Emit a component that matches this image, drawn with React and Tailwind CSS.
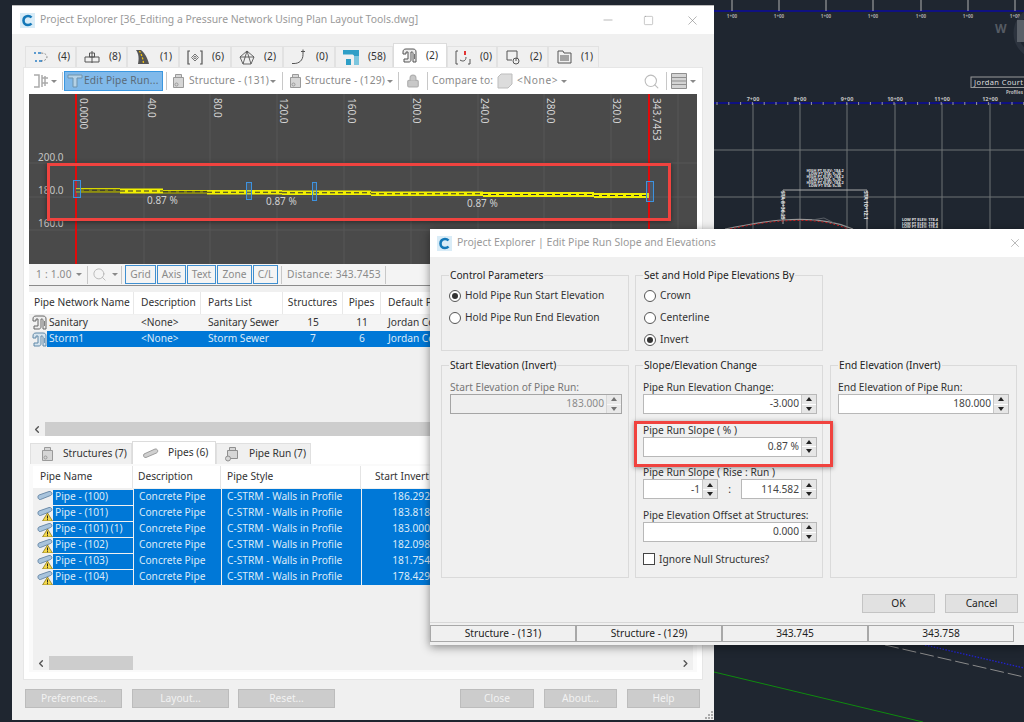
import { Minus, Square, X, Search, Lock, ChevronLeft, ChevronRight } from 'lucide-react';

const tabs = [
  { n: '(4)', w: 'w-[51px]', icon: 'dash' },
  { n: '(8)', w: 'w-[51px]', icon: 'struct' },
  { n: '(1)', w: 'w-[52px]', icon: 'road' },
  { n: '(6)', w: 'w-[52px]', icon: 'node' },
  { n: '(2)', w: 'w-[52px]', icon: 'penta' },
  { n: '(0)', w: 'w-[52px]', icon: 'curve' },
  { n: '(58)', w: 'w-[58px]', icon: 'blue' },
  { n: '(2)', w: 'w-[54px]', icon: 'network', active: true },
  { n: '(0)', w: 'w-[50px]', icon: 'alert' },
  { n: '(2)', w: 'w-[51px]', icon: 'label' },
  { n: '(1)', w: 'w-[51px]', icon: 'list' },
];

function TabIcon({ name }) {
  const stroke = '#555';
  if (name === 'dash')
    return (
      <svg width="16" height="14" viewBox="0 0 16 14" fill="none">
        <path d="M1 3h2M5 3h3" stroke="#2b7fc4" strokeWidth="1.3" />
        <path d="M8 3c4 0 6 2 6 4s-2 4-6 4" stroke="#8a8a8a" strokeDasharray="2 1.5" />
        <path d="M2 11h2M6 11h3" stroke="#2b7fc4" strokeWidth="1.3" />
      </svg>
    );
  if (name === 'struct')
    return (
      <svg width="16" height="14" viewBox="0 0 16 14" fill="none" stroke={stroke}>
        <path d="M8 1v12M5.5 3h5v4h-5zM1 7h14v5H1z" />
      </svg>
    );
  if (name === 'road')
    return (
      <svg width="16" height="16" viewBox="0 0 16 16">
        <path d="M1 1h5c4 3 7 9 8 14H3C4 10 4 5 1 1z" fill="#555" />
        <path d="M4.5 2c2 3 3.5 8 4 12" stroke="#f4c20d" strokeWidth="1.3" strokeDasharray="2 1.5" fill="none" />
      </svg>
    );
  if (name === 'node')
    return (
      <svg width="16" height="15" viewBox="0 0 16 15" fill="none" stroke={stroke}>
        <path d="M3 1H1v13h2M13 1h2v13h-2" strokeWidth="1.2" />
        <path d="M8 4l3.5 3.5L8 11 4.5 7.500z" stroke="#777" />
        <circle cx="8" cy="7.5" r="1.2" stroke="#777" />
      </svg>
    );
  if (name === 'penta')
    return (
      <svg width="16" height="15" viewBox="0 0 16 15" fill="none" stroke={stroke}>
        <path d="M8 1l7 6-3 7H4L1 7zM1 7h14M8 1L4 14M8 1l4 13" strokeWidth="0.9" />
      </svg>
    );
  if (name === 'curve')
    return (
      <svg width="16" height="16" viewBox="0 0 16 16" fill="none" stroke={stroke}>
        <path d="M1 14.5h2c5 0 9-3 9-9" />
        <path d="M12 .5v5M10 2.5h4" />
      </svg>
    );
  if (name === 'blue')
    return (
      <svg width="16" height="15" viewBox="0 0 16 15">
        <path d="M0 0h16v15h-5V6C11 5 10 4.5 9 4.5H0z" fill="#2f9fc7" />
        <path d="M3 9h5v6H3z" fill="#2f9fc7" />
        <path d="M11 6h5v9h-5z" fill="#7cc6de" />
      </svg>
    );
  if (name === 'network') return <NetworkIcon />;
  if (name === 'alert')
    return (
      <svg width="16" height="15" viewBox="0 0 16 15" fill="none" stroke={stroke}>
        <path d="M3 1H1v13h2M13 14h2V9" />
        <path d="M5 10c3 2 6 1 6-3" />
        <path d="M10 1v4" stroke="#e02020" strokeWidth="1.8" />
      </svg>
    );
  if (name === 'label')
    return (
      <svg width="16" height="15" viewBox="0 0 16 15" fill="none" stroke={stroke}>
        <path d="M2 1h10v8M2 1v9h5" />
        <circle cx="11" cy="11" r="3" />
        <path d="M11 8v3" />
      </svg>
    );
  return (
    <svg width="15" height="14" viewBox="0 0 15 14" fill="none" stroke={stroke}>
      <path d="M1 13V1h5l1 2h7v10zM3 6h9M3 8h9M3 10h9" />
    </svg>
  );
}

function NetworkIcon({ color = '#555', fill = '#ececec' }) {
  return (
    <svg width="15" height="15" viewBox="0 0 15 15" fill={fill} stroke={color} className="shrink-0">
      <path d="M1 4c0-2 1-3 3-3h7c2 0 3 1 3 3v10h-3V5c0-1-1-1-1-1H9v8c0 1-1 2-2 2H2v-3h4V4H4v2H1z" />
      <path d="M12.500 6v5" strokeWidth="0.8" />
    </svg>
  );
}

function Caret({ color = 'border-t-[#8a8a8a]' }) {
  return <span className={`block w-0 h-0 border-x-[3px] border-x-transparent border-t-[3px] ${color}`} />;
}

function Sep({ className = 'mx-[3px]' }) {
  return <span className={`w-px h-[18px] bg-[#c8c8c8] shrink-0 ${className}`} />;
}

function CanIcon({ className = '' }) {
  return (
    <svg className={`shrink-0 ${className}`} width="13" height="16" viewBox="0 0 13 16" fill="#d6d6d6" stroke="#9a9a9a">
      <path d="M3.5 1.5h6v3h-6z" />
      <path d="M1.5 4.5h10v10h-10z" />
      <circle cx="4.5" cy="11.5" r="1.5" fill="none" />
    </svg>
  );
}

function Toolbar() {
  return (
    <div className="h-[26px] flex items-center text-[#8a8a8a] text-[10.2px] whitespace-nowrap">
      <svg className="ml-[9px] shrink-0" width="17" height="16" viewBox="0 0 17 16" fill="none" stroke="#aaa" strokeWidth="1.5">
        <path d="M1 2h5v12H1M9 2v12M9 5h6M9 10h6M12 3v5M12 8v5" />
      </svg>
      <span className="ml-[1px]"><Caret /></span>
      <Sep className="ml-[5px] mr-[1px]" />
      <div className="w-[99px] h-[20px] flex items-center bg-[#80b9ea] border border-[#3a97e0] text-[#5b6b78] gap-[1px] pl-[2px] shrink-0">
        <svg width="16" height="16" viewBox="0 0 16 16" fill="#b5d2e6" stroke="#6f93ad">
          <path d="M1 2h14v3h-5v9H6V5H1z" />
        </svg>
        <span className="tracking-[0.2px]">Edit Pipe Run...</span>
      </div>
      <Sep className="ml-[3px] mr-[5px]" />
      <CanIcon />
      <span className="ml-[4px] w-[77px] tracking-[0.2px]">Structure - (131)</span>
      <span className="ml-[4px]"><Caret /></span>
      <Sep className="ml-[6px] mr-[6px]" />
      <CanIcon />
      <span className="ml-[3px] w-[77px] tracking-[0.2px]">Structure - (129)</span>
      <span className="ml-[5px]"><Caret /></span>
      <Sep className="ml-[5px] mr-[7px]" />
      <Lock size={14} className="text-[#b0b0b0] shrink-0" fill="#c8c8c8" />
      <Sep className="ml-[7px] mr-[4px]" />
      <span className="w-[65px] tracking-[0.2px]">Compare to:</span>
      <svg width="16" height="16" viewBox="0 0 16 16" fill="#dcdcdc" stroke="#bdbdbd" className="shrink-0">
        <path d="M4 1h11v10l-4 4H1V4z" />
      </svg>
      <span className="ml-[4px] w-[44px] tracking-[0.6px]">&lt;None&gt;</span>
      <Caret />
      <span className="flex-1" />
      <Search size={17} className="text-[#bcbcbc]" strokeWidth={1.5} />
      <Sep className="ml-[6px] mr-[4px]" />
      <svg width="16" height="16" viewBox="0 0 16 16" fill="#d4d4d4" stroke="#8f8f8f" className="shrink-0">
        <path d="M.5.5h15v15H.5zM.5 4.5h15M.5 8h15M.5 11.500h15" />
      </svg>
      <span className="ml-[3px] mr-[6px]"><Caret /></span>
    </div>
  );
}

const gridX = [143, 209, 276, 343, 410, 477, 543, 610, 677];
const xLabels = [
  [79, '0.0000'], [147, '40.0'], [213, '80.0'], [279, '120.0'], [347, '160.0'],
  [412, '200.0'], [480, '240.0'], [546, '280.0'], [612, '320.0'], [652, '343.7453'],
];
const segments = [
  [75, 119, 187, 191.5, false], [119, 162, 187.5, 192.5, true], [162, 206, 189, 192.5, false], [206, 281, 189, 193.5, true],
  [281, 370, 189.5, 194, true], [370, 482, 190.5, 195, true], [482, 593, 191, 196, true], [593, 648, 192, 197, true],
];

// profile view, drawn in the coordinates of the screenshot
function ProfilePlot() {
  return (
    <div className="relative h-[170px] mx-[5px] bg-[#4a4a4a] overflow-hidden">
      <svg width="669" height="170" viewBox="28 93 669 170" className="block">
        {gridX.map((x) => (
          <line key={x} x1={x} x2={x} y1="93" y2="263" stroke="#575757" />
        ))}
        {[162, 196, 229].map((y) => (
          <line key={y} x1="28" x2="697" y1={y} y2={y} stroke="#575757" />
        ))}
        {xLabels.map(([x, t]) => (
          <text key={t} transform={`translate(${x} 97) rotate(90)`} fontSize="10" fill="#d4d4d4">{t}</text>
        ))}
        {[['200.0', 160], ['180.0', 193], ['160.0', 226]].map(([t, y]) => (
          <text key={t} x="37" y={y} fontSize="10" fill="#c4c4c4">{t}</text>
        ))}
        <line x1="75" x2="75" y1="93" y2="263" stroke="#e00a0a" strokeWidth="2" />
        <line x1="648" x2="648" y1="93" y2="263" stroke="#e00a0a" strokeWidth="2" />
        {segments.map(([a, b, y1, y2, bright]) => (
          <g key={a}>
            <rect x={a} y={y1} width={b - a} height={y2 - y1} fill={bright ? '#f2f000' : '#77771f'} />
            {!bright && <line x1={a} x2={b} y1={y1 + 0.5} y2={y1 + 0.5} stroke="#d8d800" />}
            {!bright && <line x1={a} x2={b} y1={y2 - 0.5} y2={y2 - 0.5} stroke="#a8a800" />}
            <line x1={a} x2={b} y1={(y1 + y2) / 2} y2={(y1 + y2) / 2} stroke="#333" strokeDasharray="5 3" />
          </g>
        ))}
        {[[72.5, 179.5, 7, 17], [245.5, 181.5, 5, 17], [311.5, 181.5, 4, 18], [645.5, 180.5, 7, 20]].map(([x, y, w, h]) => (
          <rect key={x} x={x} y={y} width={w} height={h} fill="#4a90d0" fillOpacity="0.2" stroke="#3d92e0" />
        ))}
        {[[146, 203, 0], [265, 204, 1], [466, 206, 2]].map(([x, y, k]) => (
          <text key={k} x={x} y={y} fontSize="10" fill="#d0d0d0">0.87 %</text>
        ))}
      </svg>
      <div className="absolute left-[18px] top-[69px] w-[624px] h-[58px] border-[3px] border-[#f0433f] shadow-[0_1px_5px_rgba(0,0,0,0.45)]" />
    </div>
  );
}

function ToggleBtn({ label, w }) {
  return <div className={`${w} ml-px h-[19px] flex items-center justify-center border border-[#3f8fd0] text-[#8a8a8a] shrink-0`}>{label}</div>;
}

function PlotStatus() {
  return (
    <div className="h-[22px] flex items-center text-[10.2px] text-[#8a8a8a] border-b border-[#8c8c8c] mx-[5px] bg-[#f4f4f4] whitespace-nowrap">
      <span className="ml-[7px] w-[36px] tracking-[0.2px]">1 : 1.00</span>
      <span className="ml-[4px]"><Caret /></span>
      <Sep className="ml-[5px] mr-[4px]" />
      <Search size={15} className="text-[#b8b8b8] shrink-0" strokeWidth={1.5} />
      <span className="ml-[5px]"><Caret /></span>
      <Sep className="ml-[3px] mr-[2px]" />
      <ToggleBtn label="Grid" w="w-[31px]" />
      <ToggleBtn label="Axis" w="w-[29px]" />
      <ToggleBtn label="Text" w="w-[29px]" />
      <ToggleBtn label="Zone" w="w-[35px]" />
      <ToggleBtn label="C/L" w="w-[25px]" />
      <Sep className="ml-[3px] mr-[5px]" />
      <span className="w-[90px] tracking-[0.2px]">Distance: 343.7453</span>
      <Sep className="ml-[8px]" />
    </div>
  );
}

const netCols = 'grid grid-cols-[105px_67px_82px_60px_38px_320px]';

function NetworkTable() {
  return (
    <div className="mx-[5px] h-[136px] bg-[#f0f0f0] overflow-hidden whitespace-nowrap">
      <div className={`${netCols} h-[22px] bg-white text-[#333] mt-[6px] items-center`}>
        {['Pipe Network Name', 'Description', 'Parts List', 'Structures', 'Pipes', 'Default Profile'].map((h, i) => (
          <div key={h} className={`h-full flex items-center border-r border-[#e8e8e8] ${i === 3 || i === 4 ? 'justify-center' : i === 0 ? 'pl-[5px]' : 'pl-[7px]'}`}>{h}</div>
        ))}
      </div>
      <div className={`${netCols} h-[16px] mt-[1px] items-center bg-[#f4f4f4] text-[#333]`}>
        <div className="flex items-center pl-[3px] gap-[2px]"><NetworkIcon color="#666" fill="#eee" />Sanitary</div>
        <div className="pl-[7px]">&lt;None&gt;</div>
        <div className="pl-[7px]">Sanitary Sewer</div>
        <div className="text-center">15</div>
        <div className="text-center">11</div>
        <div className="pl-[7px]">Jordan Court</div>
      </div>
      <div className={`${netCols} h-[16px] items-center text-[#dbeaf7]`}>
        <div className="flex items-center pl-[3px] h-full">
          <NetworkIcon color="#5f88a8" fill="#d6e4ee" />
          <span className="flex-1 h-full flex items-center bg-[#0078d7] pl-[2px]">Storm1</span>
        </div>
        {['<None>', 'Storm Sewer', '7', '6', 'Jordan Court'].map((t, i) => (
          <div key={i} className={`bg-[#0078d7] h-full flex items-center ${i === 2 || i === 3 ? 'justify-center' : 'pl-[7px]'}`}>{t}</div>
        ))}
      </div>
    </div>
  );
}

function ScrollBar({ thumb, className = '', right = false }) {
  return (
    <div className={`flex items-center h-[14px] bg-[#f0f0f0] text-[#555] shrink-0 ${className}`}>
      <ChevronLeft size={11} strokeWidth={3} className="ml-[2px] w-[12px] shrink-0" />
      <div className={`${thumb} h-full bg-[#cdcdcd] ml-[2px]`} />
      {right && <ChevronRight size={11} strokeWidth={3} className="ml-auto mr-[2px]" />}
    </div>
  );
}

const pipes = [
  ['Pipe - (100)', '186.292', false],
  ['Pipe - (101)', '183.818', true],
  ['Pipe - (101) (1)', '183.000', true],
  ['Pipe - (102)', '182.098', true],
  ['Pipe - (103)', '181.754', true],
  ['Pipe - (104)', '178.429', true],
];

function PipeIcon({ warn }) {
  return (
    <svg width="16" height="16" viewBox="0 0 16 16" className="shrink-0">
      <path d="M2 6l10-3.500c3-.5 4 3 1.500 4L3.500 10.500C1 11 0 7 2 6z" fill="#a9c4dc" stroke="#55789a" strokeWidth="0.8" />
      {warn && <path d="M10.500 8l5 8h-10z" fill="#f5d94a" stroke="#7b6a10" strokeWidth="0.7" />}
      {warn && <path d="M10.500 10.500v3M10.500 14.200v1" stroke="#222" strokeWidth="1" />}
    </svg>
  );
}

function PartsTabs() {
  return (
    <div className="flex items-end h-[22px] ml-px text-[#333] whitespace-nowrap">
      <div className="w-[102px] h-[21px] flex items-center gap-[9px] pl-[10px] bg-[#f0f0f0] border border-b-0 border-[#e0e0e0]">
        <CanIcon />Structures (7)
      </div>
      <div className="w-[84px] h-[23px] flex items-center gap-[9px] pl-[10px] bg-white border border-b-0 border-[#dcdcdc]">
        <svg width="16" height="10" viewBox="0 0 16 10"><path d="M1 6l11-5c3-.5 3.500 3 1.500 4L3 9.500C.5 10 0 7 1 6z" fill="#d0d0d0" stroke="#8a8a8a" strokeWidth="0.8" /></svg>
        Pipes (6)
      </div>
      <div className="w-[95px] h-[21px] flex items-center gap-[9px] pl-[7px] bg-[#f0f0f0] border border-b-0 border-[#e0e0e0]">
        <svg width="16" height="16" viewBox="0 0 16 16" fill="#d6d6d6" stroke="#8f8f8f" className="shrink-0">
          <path d="M5.500 1.500h6v3h-6zM3.500 4.500h10v8h-10z" />
          <circle cx="4" cy="12.500" r="2.500" />
        </svg>
        Pipe Run (7)
      </div>
    </div>
  );
}

const pipeCols = 'grid grid-cols-[100px_88px_140px_75px_200px]';

function PipesTable() {
  return (
    <div className="flex-1 mx-[5px] border-y-2 border-x-4 border-[#fafafa] flex flex-col bg-[#f0f0f0] whitespace-nowrap overflow-hidden">
      <div className={`${pipeCols} h-[22px] bg-white text-[#333] items-center`}>
        <div className="h-full flex items-center pl-[7px] border-r border-[#e4e4e4]">Pipe Name</div>
        <div className="h-full flex items-center pl-[5px] border-r border-[#e4e4e4]">Description</div>
        <div className="h-full flex items-center pl-[6px] border-r border-[#e4e4e4]">Pipe Style</div>
        <div className="h-full flex items-center justify-end pr-[6px] border-r border-[#e4e4e4]">Start Invert</div>
        <div />
      </div>
      <div className="mt-[1px] flex flex-col gap-px flex-1">
        {pipes.map(([name, inv, warn]) => (
          <div key={name} className={`${pipeCols} h-[15px] text-[#dbeaf7]`}>
            <div className="flex items-center">
              <span className="w-[4px]" />
              <PipeIcon warn={warn} />
              <span className="flex-1 h-[15px] flex items-center bg-[#0078d7] pl-[2px]">{name}</span>
            </div>
            <div className="bg-[#0078d7] ml-px flex items-center pl-[5px]">Concrete Pipe</div>
            <div className="bg-[#0078d7] ml-px flex items-center pl-[5px]">C-STRM - Walls in Profile</div>
            <div className="bg-[#0078d7] ml-px flex items-center justify-end pr-[6px]">{inv}</div>
            <div className="bg-[#0078d7] ml-px" />
          </div>
        ))}
      </div>
      <ScrollBar thumb="w-[84px]" right />
    </div>
  );
}

function MainWindow() {
  return (
    <div className="absolute left-[12px] top-[5px] w-[702px] h-[715px] flex flex-col bg-[#f0f0f0] border-t border-[#bdbdbd]">
      <div className="h-[28px] bg-white flex items-center shrink-0">
        <LogoC className="ml-[8px]" />
        <span className="ml-[5px] text-[#9a9a9a] text-[10.4px] whitespace-nowrap">Project Explorer [36_Editing a Pressure Network Using Plan Layout Tools.dwg]</span>
        <span className="flex-1" />
        <Minus size={14} strokeWidth={1} className="text-[#888] mr-[28px]" />
        <Square size={11} strokeWidth={1} className="text-[#888] mr-[31px]" />
        <X size={15} strokeWidth={1} className="text-[#888] mr-[14px]" />
      </div>
      <div className="flex items-end h-[33px] pl-[13px] shrink-0">
        {tabs.map((t, i) => (
          <div key={i} className={`${t.w} flex items-center pl-[7px] gap-[9px] text-[#333] text-[10.2px] border border-b-0 ${t.active ? 'h-[24px] bg-white border-[#dcdcdc]' : 'h-[21px] bg-[#f0f0f0] border-[#e2e2e2]'}`}>
            <span className="w-[16px] h-[16px] flex items-center justify-center"><TabIcon name={t.icon} /></span>
            {t.n}
          </div>
        ))}
      </div>
      <div className="mx-[11px] h-[613px] bg-white border border-[#e6e6e6] text-[10.2px] flex flex-col shrink-0">
        <Toolbar />
        <ProfilePlot />
        <PlotStatus />
        <NetworkTable />
        <ScrollBar thumb="w-[500px]" className="mx-[5px]" />
        <div className="h-[6px] shrink-0" />
        <div className="mx-[5px]"><PartsTabs /></div>
        <PipesTable />
        <div className="h-[7px] shrink-0" />
      </div>
      <div className="flex items-start pt-[9px] pl-[13px] text-[10.2px] text-[#f2f2f2] relative flex-1">
        {[['Preferences...', 'w-[97px]', 'mr-[10px]'], ['Layout...', 'w-[97px]', 'mr-[9px]'], ['Reset...', 'w-[97px]', 'mr-[125px]'], ['Close', 'w-[74px]', 'mr-[10px]'], ['About...', 'w-[73px]', 'mr-[10px]'], ['Help', 'w-[73px]', '']].map(([t, w, m]) => (
          <div key={t} className={`${w} ${m} h-[19px] bg-[#cccccc] border border-[#bcbcbc] flex items-center justify-center`}>{t}</div>
        ))}
        <svg className="absolute right-[1px] bottom-[1px]" width="8" height="8" viewBox="0 0 8 8" fill="#aaa">
          <path d="M6 0h2v2H6zM3 3h2v2H3zM6 3h2v2H6zM0 6h2v2H0zM3 6h2v2H3zM6 6h2v2H6z" />
        </svg>
      </div>
    </div>
  );
}

function LogoC({ className = '' }) {
  return (
    <div className={`w-[15px] h-[15px] bg-[#d9ecf7] flex items-center justify-center shrink-0 ${className}`}>
      <svg width="13" height="13" viewBox="0 0 13 13" fill="none">
        <path d="M10.500 3.500C9.500 2.400 8.300 2 7 2 4.400 2 2.500 3.900 2.500 6.500S4.400 11 7 11c1.300 0 2.500-.4 3.500-1.500" stroke="#1478b8" strokeWidth="2.6" />
      </svg>
    </div>
  );
}

function Radio({ checked, label }) {
  return (
    <div className="flex items-center gap-[4px] h-[22px] text-[#333]">
      <span className="w-[12px] h-[12px] rounded-full border border-[#555] bg-white flex items-center justify-center shrink-0">
        {checked && <span className="w-[6px] h-[6px] rounded-full bg-[#333]" />}
      </span>
      {label}
    </div>
  );
}

function Group({ title, className = '', children }) {
  return (
    <div className={`relative border border-[#dadada] ${className}`}>
      <span className="absolute left-[7px] -top-[8px] px-[1px] bg-[#f0f0f0] text-[#222] whitespace-nowrap">{title}</span>
      {children}
    </div>
  );
}

function NumField({ value, disabled, className = '' }) {
  return (
    <div className={`h-[20px] flex items-center border-[1.5px] ${disabled ? 'border-[#a5a5a5] bg-[#efefef] text-[#8a8a8a]' : 'border-[#b8b8b8] bg-white text-[#444]'} ${className}`}>
      <span className="flex-1 text-right pr-[2px]">{value}</span>
      <div className={`w-[15px] h-full flex flex-col gap-px bg-white border-l border-[#c8c8c8] ${disabled ? 'opacity-60' : ''}`}>
        <div className="flex-1 bg-[#e6e6e6] flex items-center justify-center"><span className="w-0 h-0 border-x-[3px] border-x-transparent border-b-[4px] border-b-[#222]" /></div>
        <div className="flex-1 bg-[#e6e6e6] flex items-center justify-center"><span className="w-0 h-0 border-x-[3px] border-x-transparent border-t-[4px] border-t-[#222]" /></div>
      </div>
    </div>
  );
}

function Field({ label, value, className = 'mb-[9.7px]', muted }) {
  return (
    <div className={className}>
      <div className={`h-[13px] leading-[13px] whitespace-nowrap ${muted ? 'text-[#777]' : 'text-[#333]'}`}>{label}</div>
      <NumField value={value} disabled={muted} />
    </div>
  );
}

function SlopeDialog() {
  return (
    <div className="absolute left-[430px] top-[229px] w-[594px] h-[416px] bg-[#f0f0f0] shadow-[0_2px_9px_rgba(0,0,0,0.45)] text-[10.2px] flex flex-col">
      <div className="h-[28px] bg-white flex items-center shrink-0">
        <LogoC className="ml-[7px]" />
        <span className="ml-[5px] text-[#9a9a9a] text-[10.5px] whitespace-nowrap">Project Explorer | Edit Pipe Run Slope and Elevations</span>
        <span className="flex-1" />
        <X size={14} strokeWidth={1} className="text-[#888] mr-[2px]" />
      </div>
      <div className="grid grid-cols-[188px_188px_188px] gap-x-[6px] gap-y-[14px] grid-rows-[76px_213px] pl-[11px] pt-[18px]">
        <Group title="Control Parameters" className="pl-[7px] pt-[9px]">
          <Radio checked label="Hold Pipe Run Start Elevation" />
          <Radio label="Hold Pipe Run End Elevation" />
        </Group>
        <Group title="Set and Hold Pipe Elevations By" className="pl-[8px] pt-[9px]">
          <Radio label="Crown" />
          <Radio label="Centerline" />
          <Radio checked label="Invert" />
        </Group>
        <div />
        <Group title="Start Elevation (Invert)" className="px-[6px] pt-[15px] text-[#777]">
          <div className="pl-[2px]"><Field label="Start Elevation of Pipe Run:" value="183.000" muted /></div>
        </Group>
        <Group title="Slope/Elevation Change" className="pl-[7px] pr-[5px] pt-[15px]">
          <Field label="Pipe Run Elevation Change:" value="-3.000" />
          <Field label="Pipe Run Slope ( % )" value="0.87 %" />
          <div className="mb-[9.7px]">
            <div className="h-[13px] leading-[13px] text-[#333]">Pipe Run Slope ( Rise : Run )</div>
            <div className="flex items-center">
              <NumField value="-1" className="w-[75px]" />
              <span className="w-[23px] text-center text-[#333]">:</span>
              <NumField value="114.582" className="flex-1" />
            </div>
          </div>
          <Field label="Pipe Elevation Offset at Structures:" value="0.000" />
          <div className="flex items-center gap-[4px] text-[#333] mt-[1px]">
            <span className="w-[12px] h-[12px] bg-white border border-[#444]" />
            Ignore Null Structures?
          </div>
        </Group>
        <Group title="End Elevation (Invert)" className="ml-px px-[7px] pt-[15px]">
          <Field label="End Elevation of Pipe Run:" value="180.000" />
        </Group>
      </div>
      <div className="flex justify-end gap-[10px] pr-[6px] mt-[16px]">
        <div className="w-[73px] h-[19px] bg-[#e1e1e1] border border-[#c4c4c4] flex items-center justify-center text-[#222]">OK</div>
        <div className="w-[73px] h-[19px] bg-[#e1e1e1] border border-[#c4c4c4] flex items-center justify-center text-[#222]">Cancel</div>
      </div>
      <div className="mt-[9px] border-t border-[#d8d8d8] pt-[2px] flex text-[#222]">
        {['Structure - (131)', 'Structure - (129)', '343.745', '343.758'].map((t) => (
          <div key={t} className="w-[146px] h-[17px] border border-[#a8a8a8] flex items-center justify-center">{t}</div>
        ))}
      </div>
      <div className="absolute left-[204px] top-[192px] w-[199px] h-[46px] border-[3px] border-[#f0433f] shadow-[0_1px_5px_rgba(0,0,0,0.4)]" />
    </div>
  );
}

const topTicks = [732, 779, 826, 873, 921, 968, 1015];
const stations = [[753, '7+00'], [800, '8+00'], [847, '9+00'], [895, '10+00'], [942, '11+00'], [990, '12+00']];
const minor = Array.from({ length: 27 }, (_, i) => 717 + i * 11.8);

// the drawing behind the windows
function CadBackdrop() {
  return (
    <svg className="absolute inset-0" width="1024" height="722" viewBox="0 0 1024 722" fill="none">
      <path d="M714 11h310M714 103h310" stroke="#0b0b9c" strokeWidth="1.5" />
      {topTicks.map((x) => (
        <g key={x}>
          <line x1={x} x2={x} y1="0" y2="11" stroke="#b0b0b0" />
          <text x={x} y="18" textAnchor="middle" fontSize="4.5" fontWeight="700" fill="#aaa">1+00</text>
        </g>
      ))}
      <circle cx="1040" cy="33" r="24" stroke="#2c333e" strokeWidth="5" />
      <rect x="1017" y="20" width="7" height="22" fill="#5a6068" />
      <text x="995" y="33" fontSize="12" fontWeight="700" fill="#555b63">W</text>
      {stations.map(([x, t]) => (
        <g key={x}>
          <line x1={x} x2={x} y1="103" y2="230" stroke="#6f7275" />
          <text x={x} y="101" textAnchor="middle" fontSize="5.5" fontWeight="700" fill="#c4c4c4">{t}</text>
        </g>
      ))}
      {minor.map((x) => (
        <line key={x} x1={x} x2={x} y1="102" y2="105" stroke="#9a9a9a" />
      ))}
      <path d="M714 150h310M714 197h310" stroke="#6f7275" />
      <rect x="971" y="77" width="60" height="10.5" stroke="#999" fill="#1f2630" />
      <text x="974" y="85" fontSize="7.5" fill="#ddd" letterSpacing="0.4">Jordan Court</text>
      <text x="1006" y="94" fontSize="4.5" fontWeight="700" fill="#bbb">Profiles</text>
      <path d="M783 224v-34h84v39" stroke="#a9a9a9" />
      {[172, 175, 178, 181, 184, 187].map((y, i) => (
        <text key={y} x="825" y={y} textAnchor="middle" fontSize="3.8" fontWeight="700" fill="#e4e4e4">{i % 2 ? 'LOW PT STA: 9+36' : 'HIGH PT ELEV: 184.2'}</text>
      ))}
      <text transform="translate(781 191) rotate(90)" fontSize="5" fontWeight="700" fill="#e4e4e4">STA 8+36.25</text>
      <text transform="translate(864 191) rotate(90)" fontSize="5" fontWeight="700" fill="#e4e4e4">STA 10+12.1</text>
      {[221, 225, 228].map((y) => (
        <text key={y} x="920" y={y} textAnchor="middle" fontSize="3.8" fontWeight="700" fill="#e4e4e4">LOW PT ELEV: 178.4</text>
      ))}
      <path d="M725 229c20-4 40-8 58-9 30-2 52 1 70 9" stroke="#999" strokeWidth="1.2" />
      <path d="M730 229c20-4 36-7 53-8 30-2 50 1 67 9" stroke="#c92020" strokeDasharray="2 2" />
      <path d="M812 220l12-2 10 5" stroke="#5a5f66" />
      <path d="M714 672l209 50" stroke="#0f8a0f" />
      <path d="M885 645l139 32" stroke="#8a8a8a" strokeDasharray="14 4" />
      <path d="M925 645l99 23" stroke="#2222d0" strokeDasharray="1.5 1.5" strokeWidth="1.3" />
    </svg>
  );
}

export default function App() {
  return (
    <div className="relative w-[1024px] h-[722px] overflow-hidden bg-[#1f2630] font-['Noto_Sans',sans-serif]">
      <CadBackdrop />
      <MainWindow />
      <SlopeDialog />
    </div>
  );
}
